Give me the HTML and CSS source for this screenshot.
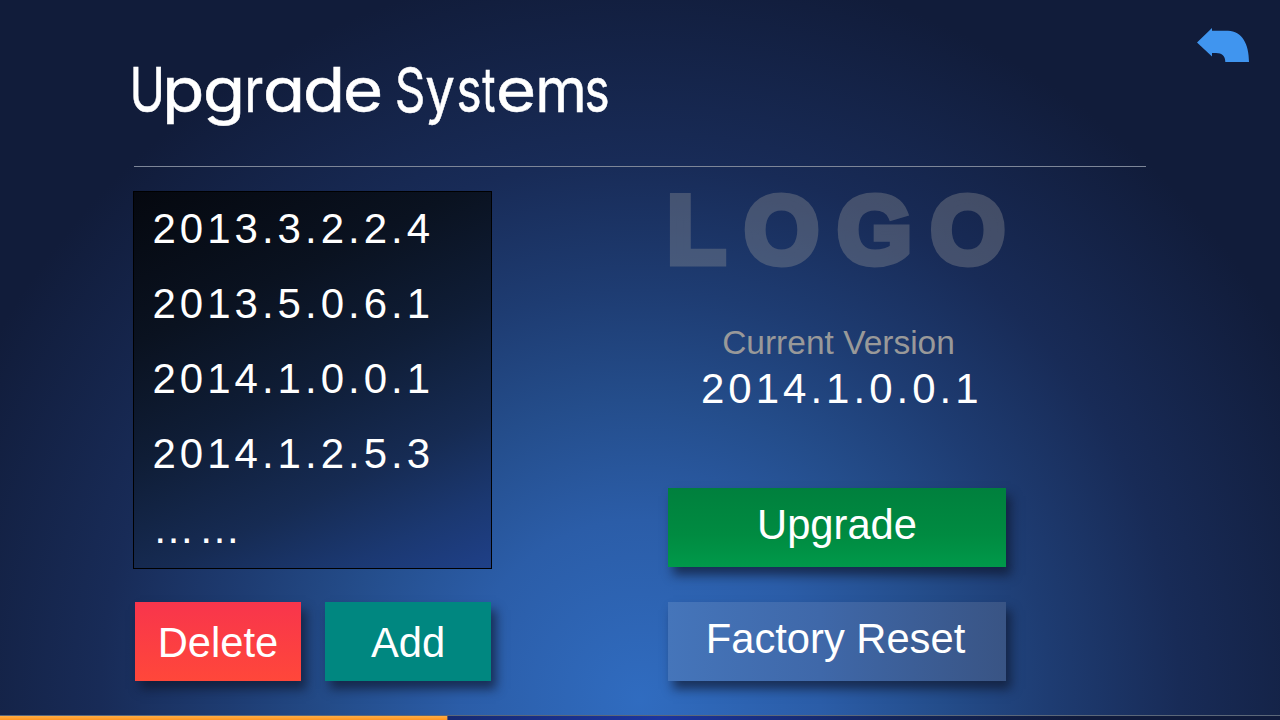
FILE: index.html
```html
<!DOCTYPE html>
<html lang="en">
<head>
<meta charset="utf-8">
<title>Upgrade Systems</title>
<link rel="stylesheet" href="styles.css">
</head>
<body>
<div class="screen">
  <header class="header">
    <h1 class="title"><span class="g cap-u">U</span><span class="g p">p</span><span class="g bowl">g</span><span class="g r">r</span><span class="g bowl">a</span><span class="g bowl">d</span><span class="g bowl">e</span> <span class="g cap-s">S</span><span class="g y">y</span><span class="g s">s</span><span class="g t">t</span><span class="g bowl">e</span><span class="g m">m</span><span class="g s">s</span></h1>
    <svg class="back" width="54" height="36" viewBox="1196 27 54 36" role="img" aria-label="Back"><path fill="#4095ef" d="M1197 42.5 1212 28V30.7H1228C1242 31 1249 44 1249 62H1225.3C1225.3 56 1222 53 1216 53H1212V56.5Z"/></svg>
  </header>
  <main class="content">
    <section class="left">
      <ul class="versions">
        <li>2013.3.2.2.4</li>
        <li>2013.5.0.6.1</li>
        <li>2014.1.0.0.1</li>
        <li>2014.1.2.5.3</li>
        <li>……</li>
      </ul>
      <div class="actions">
        <button class="btn delete">Delete</button>
        <button class="btn add">Add</button>
      </div>
    </section>
    <section class="right">
      <div class="logo">LOGO</div>
      <div class="label">Current Version</div>
      <div class="current">2014.1.0.0.1</div>
      <button class="btn wide upgrade">Upgrade</button>
      <button class="btn wide reset">Factory Reset</button>
    </section>
  </main>
  <footer class="progress"><div class="done"></div></footer>
</div>
</body>
</html>
```
FILE: styles.css
```css
* { box-sizing: border-box; margin: 0; padding: 0; }
body { width: 1280px; height: 720px; overflow: hidden; font-family: "Liberation Sans", Arial, sans-serif; color: #fff; }
.screen {
  width: 1280px; height: 720px; display: flex; flex-direction: column;
  background: radial-gradient(circle 740px at 640px 700px, #306cc0 0, #2b5da8 180px, #244d8b 300px, #1e3c72 410px, #182b57 540px, #111c3a 740px);
}
.header { height: 167px; flex: none; margin: 0 134px; border-bottom: 1px solid #7d8698; display: flex; justify-content: space-between; }
.title { font: 400 62px/76px Inter, sans-serif; font-feature-settings: "cv11"; padding-top: 52px; white-space: nowrap; word-spacing: -6px; -webkit-text-stroke: .5px #fff; }
.g { display: inline-block; transform-origin: left; white-space: nowrap; }
.cap-u { width: 32px; transform: scaleX(.77); text-indent: -6px; }
.p { width: 40px; transform: scaleX(1.12); text-indent: -3.5px; }
.bowl { width: 40px; transform: scaleX(1.12); text-indent: -3px; }
.r { width: 20px; transform: scaleX(.8); text-indent: -2px; }
.cap-s { width: 29px; transform: scaleX(.77); text-indent: -3px; }
.y { width: 32px; transform: scaleX(.85); text-indent: -1px; }
.s { width: 25px; transform: scaleX(.77); text-indent: -2px; }
.t { width: 16px; transform: scaleX(.65); text-indent: -1px; }
.m { width: 47px; transform: scaleX(.95); text-indent: -4px; }
.back { margin: 27px -104px 0 0; flex: none; }
.content { flex: 1; display: flex; padding: 24px 0 0 133px; }
.left { width: 359px; }
.versions {
  list-style: none; height: 378px; border: 1px solid #000; overflow: hidden;
  background: linear-gradient(155deg, #05080f 0, #0a1220 28%, #0f1d36 50%, #162b53 72%, #1b3871 87%, #1f4088 100%);
}
.versions li { height: 75px; font-size: 42px; line-height: 73px; letter-spacing: 4px; padding-left: 18.5px; }
.actions { display: flex; gap: 24px; padding: 33px 0 0 2px; }
.btn { display: block; border: 0; width: 166px; height: 79px; font: 41.7px/77px "Liberation Sans", Arial, sans-serif; color: #fff; text-align: center; box-shadow: 5px 8px 10px rgba(14,20,40,.65); }
.delete { background: linear-gradient(#f8354c, #ff473a); padding-top: 2px; }
.add { background: #008780; padding-top: 2px; }
.right { width: 338px; margin-left: 176px; }
.logo { height: 136px; font: 700 96px/77px "Liberation Sans", Arial, sans-serif; letter-spacing: 18.5px; color: #999; -webkit-text-stroke: 7px #999; opacity: .34; white-space: nowrap; margin: 0 -30px 0 -1px; }
.label { font-size: 33.5px; line-height: 32px; color: #999; text-align: center; padding-left: 3px; }
.current { height: 129px; font-size: 42px; line-height: 60px; letter-spacing: 4px; padding-left: 33px; }
.wide { width: 338px; padding-bottom: 6px; line-height: 73px; }
.upgrade { background: linear-gradient(#00803d, #008b41 60%, #00994a); }
.reset { margin-top: 35px; background: linear-gradient(90deg, #4575ba, #3f68a9 45%, #395484); padding-right: 3px; }
.progress { height: 5px; flex: none; border-top: 1px solid #5b6779; background: linear-gradient(90deg, #162a72 448px, #1b35a0 660px, #132559 900px, #101b3c 1080px); }
.done { width: 448px; height: 4px; background: linear-gradient(#ffad43, #ff9420); border-right: 1px solid #685a60; }
```
